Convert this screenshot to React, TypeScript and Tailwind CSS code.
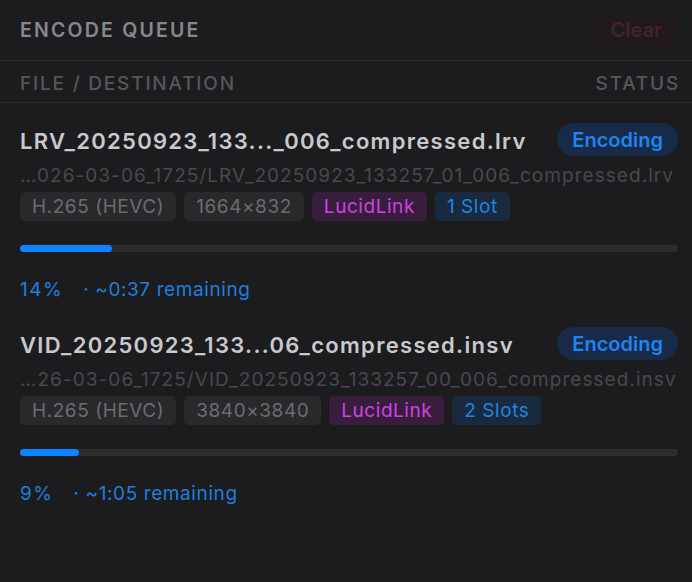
import React from "react";

type Item = {
  title: string;
  path: string;
  codec: string;
  res: string;
  slots: string;
  pct: number;
  remaining: string;
};

const items: Item[] = [
  {
    title: "LRV_20250923_133..._006_compressed.lrv",
    path: "…026-03-06_1725/LRV_20250923_133257_01_006_compressed.lrv",
    codec: "H.265 (HEVC)",
    res: "1664×832",
    slots: "1 Slot",
    pct: 14,
    remaining: "· ~0:37 remaining",
  },
  {
    title: "VID_20250923_133...06_compressed.insv",
    path: "…26-03-06_1725/VID_20250923_133257_00_006_compressed.insv",
    codec: "H.265 (HEVC)",
    res: "3840×3840",
    slots: "2 Slots",
    pct: 9,
    remaining: "· ~1:05 remaining",
  },
];

function Row({ it }: { it: Item }) {
  return (
    <div className="pl-5 pr-[14px] pt-5 pb-[6px]">
      <div className="flex h-[33px] items-center justify-between">
        <div className="whitespace-nowrap pt-[4px] text-[22px] font-semibold tracking-[1.3px] text-[#c9c9cd]">{it.title}</div>
        <div className="flex h-[33px] items-center rounded-full bg-[#172a47] px-[15px] text-[20px] font-semibold text-[#1f84f0]">
          Encoding
        </div>
      </div>
      <div className="mt-[9px] h-[22px] whitespace-nowrap text-[19px] leading-[22px] tracking-[1.05px] text-[#48484c]">
        {it.path}
      </div>
      <div className="mt-[5px] flex h-[29px] gap-2 text-[19px] leading-[29px] tracking-[0.55px]">
        <span className="rounded-[5px] bg-[#29292b] px-3 text-[#6c6c70]">{it.codec}</span>
        <span className="rounded-[5px] bg-[#29292b] px-3 text-[#6c6c70]">{it.res}</span>
        <span className="rounded-[5px] bg-[#381e3c] px-3 text-[#cc44e0]">LucidLink</span>
        <span className="rounded-[5px] bg-[#192a3e] px-3 text-[#1e86e2]">{it.slots}</span>
      </div>
      <div className="mt-[24px] h-[7px] w-full rounded-full bg-[#2c2c2e]">
        <div className="h-[7px] rounded-full bg-[#0a84ff]" style={{ width: `${it.pct}%` }} />
      </div>
      <div className="mt-[27px] flex h-[22px] gap-[20px] text-[19px] leading-[22px] tracking-[0.6px] text-[#1f7fdc]">
        <span className="tracking-[1.5px]">{it.pct}%</span>
        <span>{it.remaining}</span>
      </div>
    </div>
  );
}

export default function App() {
  return (
    <div
      className="h-[582px] w-[692px] overflow-hidden bg-[#1c1c1e]"
      style={{ fontFamily: "Inter, 'Noto Sans', sans-serif" }}
    >
      <div className="flex h-[61px] items-center justify-between border-b border-[#2a2a2c] pl-5 pr-[14px]">
        <div className="pt-[2px] text-[19.5px] font-semibold tracking-[2.2px] text-[#88888c]">ENCODE QUEUE</div>
        <div className="flex h-[34px] items-center rounded-md bg-[#211a1c] px-4 text-[20px] font-semibold text-[#442226]">
          Clear
        </div>
      </div>
      <div className="flex h-[42px] items-center justify-between border-b border-[#2a2a2c] pl-5 pr-[14px] pt-[5px] text-[19px] font-medium tracking-[1.8px] text-[#56565a]">
        <span>FILE / DESTINATION</span>
        <span className="-mr-[2px]">STATUS</span>
      </div>
      {items.map((it) => (
        <Row key={it.title} it={it} />
      ))}
    </div>
  );
}
